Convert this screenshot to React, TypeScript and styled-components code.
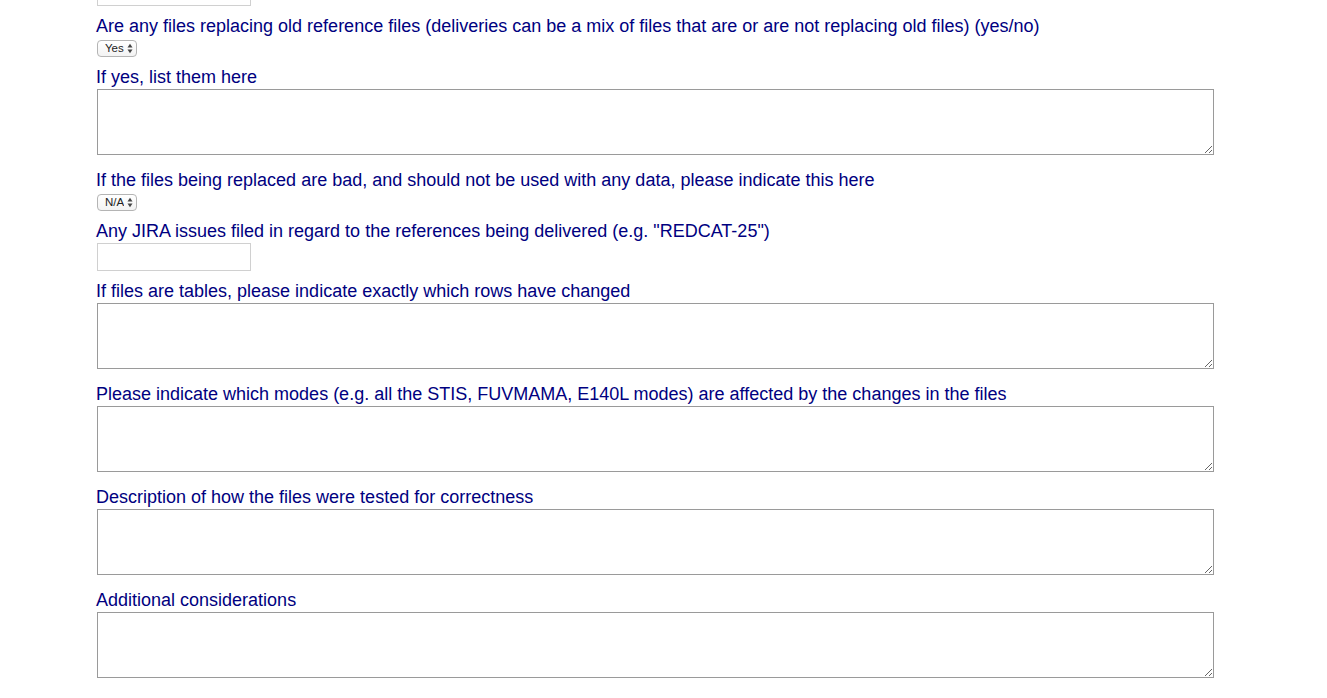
import React from "react";
import styled, { createGlobalStyle } from "styled-components";

const GlobalStyle = createGlobalStyle`
  html, body {
    margin: 0;
    padding: 0;
    background: #ffffff;
  }
  body {
    font-family: "Liberation Sans", Arial, Helvetica, sans-serif;
    overflow: hidden;
  }
`;

const Page = styled.div`
  width: 1327px;
  height: 698px;
  overflow: hidden;
  padding-left: 96px;
  box-sizing: border-box;
`;

const Form = styled.form`
  display: flex;
  flex-direction: column;
  width: 1118px;
  margin-top: -22px;
`;

const Field = styled.div`
  display: flex;
  flex-direction: column;
  align-items: flex-start;
`;

const Label = styled.label`
  color: #000080;
  font-size: 18px;
  line-height: 20px;
  margin: 9px 0 2px;
`;

const TextInput = styled.input`
  width: 154px;
  height: 28px;
  box-sizing: border-box;
  margin: 0 0 1px 1px;
  border: 1px solid #d0d0d0;
  background: #fff;
  padding: 2px 4px;
`;

const TextArea = styled.textarea`
  width: 1117px;
  height: 66px;
  box-sizing: border-box;
  margin: 0 0 6px 1px;
  border: 1px solid #9a9a9a;
  padding: 2px;
  font-family: inherit;
  resize: both;
  display: block;
`;

const SelectWrap = styled.span`
  position: relative;
  display: inline-block;
  margin: 2px 0 1px 1px;
`;

const Select = styled.select<{ $w: number }>`
  appearance: none;
  -webkit-appearance: none;
  width: ${({ $w }) => $w}px;
  height: 17px;
  box-sizing: border-box;
  border: 1px solid #b4b4b4;
  border-radius: 4px;
  background: linear-gradient(#ffffff, #f3f3f3);
  font-family: "Liberation Sans", Arial, sans-serif;
  font-size: 11.5px;
  color: #222;
  padding: 0 12px 0 7px;
  line-height: 15px;
  display: block;
`;

const Arrows = styled.svg`
  position: absolute;
  right: 4px;
  top: 3px;
  pointer-events: none;
`;

const SmallSelect = ({ value, width }: { value: string; width: number }) => (
  <SelectWrap>
    <Select $w={width} defaultValue={value}>
      <option>{value}</option>
    </Select>
    <Arrows width="6" height="11" viewBox="0 0 6 11">
      <path d="M0.5 4.5 L3 0.8 L5.5 4.5 Z" fill="#444" />
      <path d="M0.5 6.5 L3 10.2 L5.5 6.5 Z" fill="#444" />
    </Arrows>
  </SelectWrap>
);

const App: React.FC = () => {
  return (
    <Page>
      <GlobalStyle />
      <Form>
        <Field>
          <TextInput type="text" />
        </Field>
        <Field>
          <Label>
            Are any files replacing old reference files (deliveries can be a mix of files that
            are or are not replacing old files) (yes/no)
          </Label>
          <SmallSelect value="Yes" width={40} />
        </Field>
        <Field>
          <Label>If yes, list them here</Label>
          <TextArea />
        </Field>
        <Field>
          <Label>
            If the files being replaced are bad, and should not be used with any data, please
            indicate this here
          </Label>
          <SmallSelect value="N/A" width={40} />
        </Field>
        <Field>
          <Label>Any JIRA issues filed in regard to the references being delivered (e.g. "REDCAT-25")</Label>
          <TextInput type="text" />
        </Field>
        <Field>
          <Label>If files are tables, please indicate exactly which rows have changed</Label>
          <TextArea />
        </Field>
        <Field>
          <Label>
            Please indicate which modes (e.g. all the STIS, FUVMAMA, E140L modes) are affected by
            the changes in the files
          </Label>
          <TextArea />
        </Field>
        <Field>
          <Label>Description of how the files were tested for correctness</Label>
          <TextArea />
        </Field>
        <Field>
          <Label>Additional considerations</Label>
          <TextArea />
        </Field>
      </Form>
    </Page>
  );
};

export default App;
